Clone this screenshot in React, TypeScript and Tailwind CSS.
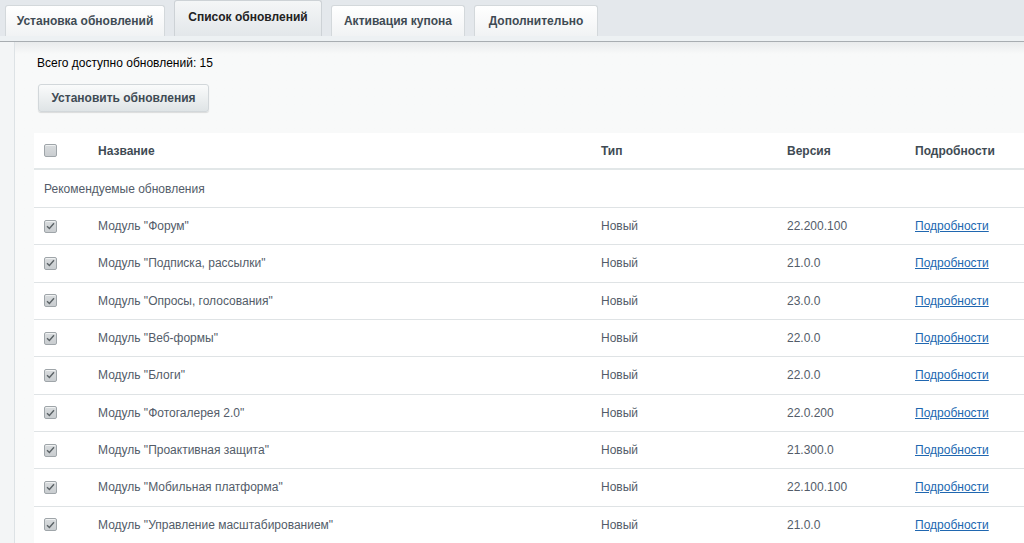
import React from 'react'

const tabs = ['Установка обновлений', 'Список обновлений', 'Активация купона', 'Дополнительно']

const rows = [
  { name: 'Модуль "Форум"', version: '22.200.100' },
  { name: 'Модуль "Подписка, рассылки"', version: '21.0.0' },
  { name: 'Модуль "Опросы, голосования"', version: '23.0.0' },
  { name: 'Модуль "Веб-формы"', version: '22.0.0' },
  { name: 'Модуль "Блоги"', version: '22.0.0' },
  { name: 'Модуль "Фотогалерея 2.0"', version: '22.0.200' },
  { name: 'Модуль "Проактивная защита"', version: '21.300.0' },
  { name: 'Модуль "Мобильная платформа"', version: '22.100.100' },
  { name: 'Модуль "Управление масштабированием"', version: '21.0.0' },
]

function Checkbox({ checked }: { checked?: boolean }) {
  return (
    <span className="flex h-[13px] w-[13px] items-center justify-center rounded-[2px] border border-[#9fa5a9] bg-gradient-to-b from-[#d9dcde] to-[#c9cdd0] shadow-[inset_0_1px_0_rgba(255,255,255,0.6)]">
      {checked && (
        <svg width="9" height="8" viewBox="0 0 9 8">
          <path d="M1 4.2 L3.4 6.5 L8 1.2" fill="none" stroke="#5b6266" strokeWidth="1.4" />
        </svg>
      )}
    </span>
  )
}

const cols = 'grid grid-cols-[64px_503px_186px_128px_1fr] items-center'

export default function App() {
  return (
    <div className="h-[543px] w-[1024px] overflow-hidden bg-[#f8f9f9] font-['Liberation_Sans',Arial,sans-serif]">
      {/* tabs */}
      <div className="flex h-[36px] items-end gap-[9px] bg-[#e4e8ec] pl-[5px]">
        {tabs.map((t, i) =>
          i === 1 ? (
            <div
              key={t}
              className="flex h-[36px] w-[148px] items-center justify-center rounded-t-[3px] border border-b-0 border-[#cdd2d6] bg-gradient-to-b from-[#f4f6f7] to-[#e3e7ea] pb-[3px] text-[12px] font-bold text-[#222]"
            >
              {t}
            </div>
          ) : (
            <div
              key={t}
              className={
                'flex h-[31px] items-center justify-center rounded-t-[3px] border border-b-0 border-[#d3d8db] bg-gradient-to-b from-white to-[#f1f3f4] text-[12px] font-bold text-[#3f4b54] ' +
                (i === 0 ? 'w-[160px]' : i === 2 ? 'w-[134px]' : 'w-[124px]')
              }
            >
              {t}
            </div>
          )
        )}
      </div>
      <div className="h-[6px] border-b border-[#a8adb1] bg-[#edf1f3]" />

      <div className="flex">
        <div className="w-[15px] shrink-0 self-stretch border-r border-[#dde2e5] bg-[#f3f5f6]" />
        <div className="flex-1 bg-gradient-to-b from-[#e9ebec] via-[#f8f9f9] via-[12px] to-[#f8f9f9]">
          <div className="pl-[22px] pt-[12px] text-[12px] text-black">Всего доступно обновлений: 15</div>
          <div className="pl-[23px] pt-[12px]">
            <button className="h-[28px] w-[171px] rounded-[3px] border border-[#d2d7da] bg-gradient-to-b from-[#fafbfb] to-[#dfe4e6] text-[12px] font-bold text-[#3f4b54] shadow-[0_1px_1px_rgba(0,0,0,0.12)]">
              Установить обновления
            </button>
          </div>

          <div className="ml-[19px] mt-[21px] bg-white text-[12px]">
            <div className={cols + ' h-[37px] border-b-2 border-[#e2e7e8] font-bold text-[#3f4b54]'}>
              <div className="pl-[10px]">
                <Checkbox />
              </div>
              <div>Название</div>
              <div>Тип</div>
              <div>Версия</div>
              <div>Подробности</div>
            </div>
            <div className="flex h-[38px] items-center border-b border-[#dfe3e5] pl-[10px] text-[#535c69]">
              Рекомендуемые обновления
            </div>
            {rows.map((r) => (
              <div key={r.name} className={cols + ' h-[37.33px] border-b border-[#dfe3e5] text-[#535c69]'}>
                <div className="pl-[10px]">
                  <Checkbox checked />
                </div>
                <div>{r.name}</div>
                <div>Новый</div>
                <div>{r.version}</div>
                <div>
                  <a href="#" className="text-[#2067b0] underline">
                    Подробности
                  </a>
                </div>
              </div>
            ))}
          </div>
        </div>
      </div>
    </div>
  )
}
